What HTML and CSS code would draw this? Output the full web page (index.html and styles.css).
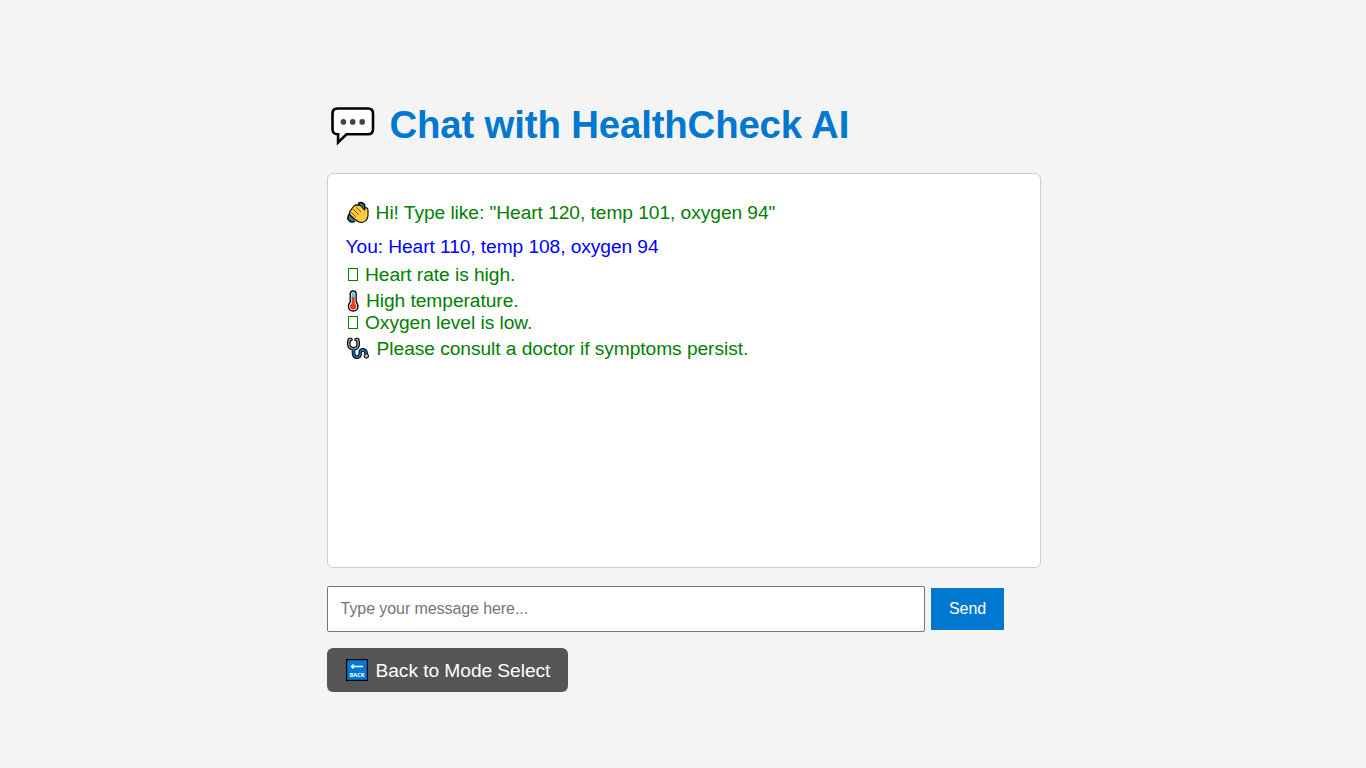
FILE: index.html
```html
<!DOCTYPE html>
<html lang="en">
<head>
  <meta charset="UTF-8">
  <title>HealthCheck AI Chat</title>
  <link rel="stylesheet" href="styles.css">
</head>
<body>
  <div class="container">
    <h1>
      <svg class="title-icon" viewBox="0 0 48 44">
        <path d="M8.5 5.5H39Q44 5.5 44 10.5V26Q44 31.3 39 31.3H17.5L9.1 39.5V31.3H8.5Q3.5 31.3 3.5 26V10.5Q3.5 5.5 8.5 5.5Z" fill="#fff" stroke="#000" stroke-width="2.6"/>
        <g fill="#444"><circle cx="14.4" cy="18.9" r="2.8"/><circle cx="23.7" cy="18.9" r="2.8"/><circle cx="33.2" cy="18.9" r="2.8"/></g>
      </svg>
      <span>Chat with HealthCheck AI</span>
    </h1>

    <div class="chatbox">
      <div class="bot greeting">
        <svg class="emoji" viewBox="0 0 24 24">
          <path d="M12.5 4Q12 1 15 1.5Q20 2 18.5 8M4 12Q0 17 3 19.5Q6 22.5 9 20" fill="#2b7f93" stroke="#000" stroke-width="1.4"/>
          <path d="M4 10L8 5Q9.5 3 11.5 4.5L14 4L18.5 9L19 7Q21.5 6 22 9V15Q21 21 15.5 21.5Q11.5 21 9 18.5L4.5 14.5Q2.5 12.5 4 10Z" fill="#ffc83d" stroke="#000" stroke-width="1.1" stroke-linejoin="round"/>
          <path d="M7 8L12.5 13.5M10 6L15 11M5 11L10 16" fill="none" stroke="#5a4000" stroke-width=".8"/>
        </svg>
        <span>Hi! Type like: "Heart 120, temp 101, oxygen 94"</span>
      </div>
      <div class="user">You: Heart 110, temp 108, oxygen 94</div>
      <div class="bot heart"><i class="box"></i><span>Heart rate is high.</span></div>
      <div class="bot temp">
        <svg class="thermo" viewBox="0 0 14 24">
          <path d="M4.2 13V5Q4.2 1.8 7.2 1.8Q10.2 1.8 10.2 5V13Q12 15 12 17.5Q11.7 22 7.2 22Q2.7 22 2.4 17.5Q2.4 15 4.2 13Z" fill="#e4eef0" stroke="#000" stroke-width="1.3"/>
          <path d="M5.7 3.5H8.7V9H5.7Z" fill="#50c8ef"/>
          <path d="M5.7 8H8.7V14.5Q10.8 15.5 10.5 18Q10 20.5 7.2 20.5Q4.4 20.5 3.9 18Q3.6 15.5 5.7 14.5Z" fill="#f03a17"/>
        </svg>
        <span>High temperature.</span>
      </div>
      <div class="bot oxygen"><i class="box"></i><span>Oxygen level is low.</span></div>
      <div class="bot doctor">
        <svg class="emoji wide" viewBox="0 0 24 24">
          <g fill="none" stroke-linecap="round" stroke-linejoin="round">
            <path d="M5 2.5H3.3L2.7 7Q3 11.5 7.5 11.8Q12 11.5 12.3 7L11.7 2.5H10M7.5 12V16Q8 20.5 11 20.3Q14.5 20 14.2 16Q14.2 12.8 17 12.8Q20.2 13 20.2 17" stroke="#000" stroke-width="3.6"/>
            <path d="M5 2.5H3.3L2.7 7Q3 11.5 7.5 11.8Q12 11.5 12.3 7L11.7 2.5H10" stroke="#aaa" stroke-width="1.3"/>
            <path d="M7.5 12V16Q8 20.5 11 20.3Q14.5 20 14.2 16Q14.2 12.8 17 12.8Q20.2 13 20.2 17" stroke="#0d70c4" stroke-width="1.7"/>
          </g>
          <circle cx="20.3" cy="18.9" r="2.3" fill="#aaa" stroke="#000" stroke-width="1"/>
        </svg>
        <span>Please consult a doctor if symptoms persist.</span>
      </div>
    </div>

    <div class="input-row">
      <input type="text" class="message" placeholder="Type your message here...">
      <button class="send">Send</button>
    </div>

    <a class="back">
      <svg class="back-icon" viewBox="0 0 22 22">
        <rect x=".6" y=".6" width="20.8" height="20.8" fill="#0078d7" stroke="#000" stroke-width="1.2"/>
        <path d="M17 7.5H5.5M7.5 5.5L5.5 7.5L7.5 9.5" fill="none" stroke="#fff" stroke-width="1.3"/>
        <text class="back-label" x="11" y="17.7" text-anchor="middle">BACK</text>
      </svg>
      <span class="back-text">Back to Mode Select</span>
    </a>
  </div>
</body>
</html>
```
FILE: styles.css
```css
body { margin: 0; background: #f4f4f4; font-family: "Liberation Sans", Arial, sans-serif; font-size: 19.2px; line-height: 22px; letter-spacing: -0.06px; }
.container { width: 714px; margin-left: 327px; padding-top: 103px; }
h1 { display: flex; margin: 0 0 26px; height: 44px; color: #0078d0; font-size: 38.4px; line-height: 44px; letter-spacing: -0.16px; white-space: nowrap; }
.title-icon { width: 48px; height: 44px; margin: 0 12.4px 0 2px; }
.chatbox { box-sizing: border-box; height: 395px; padding: 28px 17.6px 0; background: #fff; border: 1px solid #ccc; border-radius: 6px; }
.bot { display: flex; align-items: center; height: 22px; color: green; }
.user { height: 22px; margin: 12px 0 6px; color: blue; letter-spacing: -0.08px; }
.emoji { width: 24px; height: 24px; margin-right: 6px; }
.wide { margin-right: 7px; }
.thermo { width: 14px; height: 24px; margin-right: 6.4px; }
.box { box-sizing: border-box; width: 10px; height: 13px; margin: 0 7.4px 2px 2px; border: 1px solid green; }
.temp { margin-top: 4px; }
.doctor { margin-top: 4px; }
.input-row { display: flex; align-items: center; gap: 6px; margin-top: 18px; }
.message { box-sizing: border-box; width: 598px; height: 46px; padding: 0 12.6px; border: 1px solid #767676; border-radius: 2px; font: 16px "Liberation Sans", Arial, sans-serif; letter-spacing: -0.08px; }
.message::placeholder { color: #757575; }
.send { width: 73px; height: 42px; padding: 0; border: 0; background: #0078d0; color: #fff; font: 16px "Liberation Sans", Arial, sans-serif; letter-spacing: -0.1px; }
.back { display: flex; align-items: center; box-sizing: border-box; width: 241px; height: 44px; margin-top: 16px; padding-left: 19px; background: #555; border-radius: 6px; color: #fff; white-space: nowrap; }
.back-icon { width: 22px; height: 22px; margin-right: 7.5px; }
.back-text { padding-top: 2px; }
.back-label { fill: #fff; font: bold 5.8px "Open Sans", sans-serif; }
```
